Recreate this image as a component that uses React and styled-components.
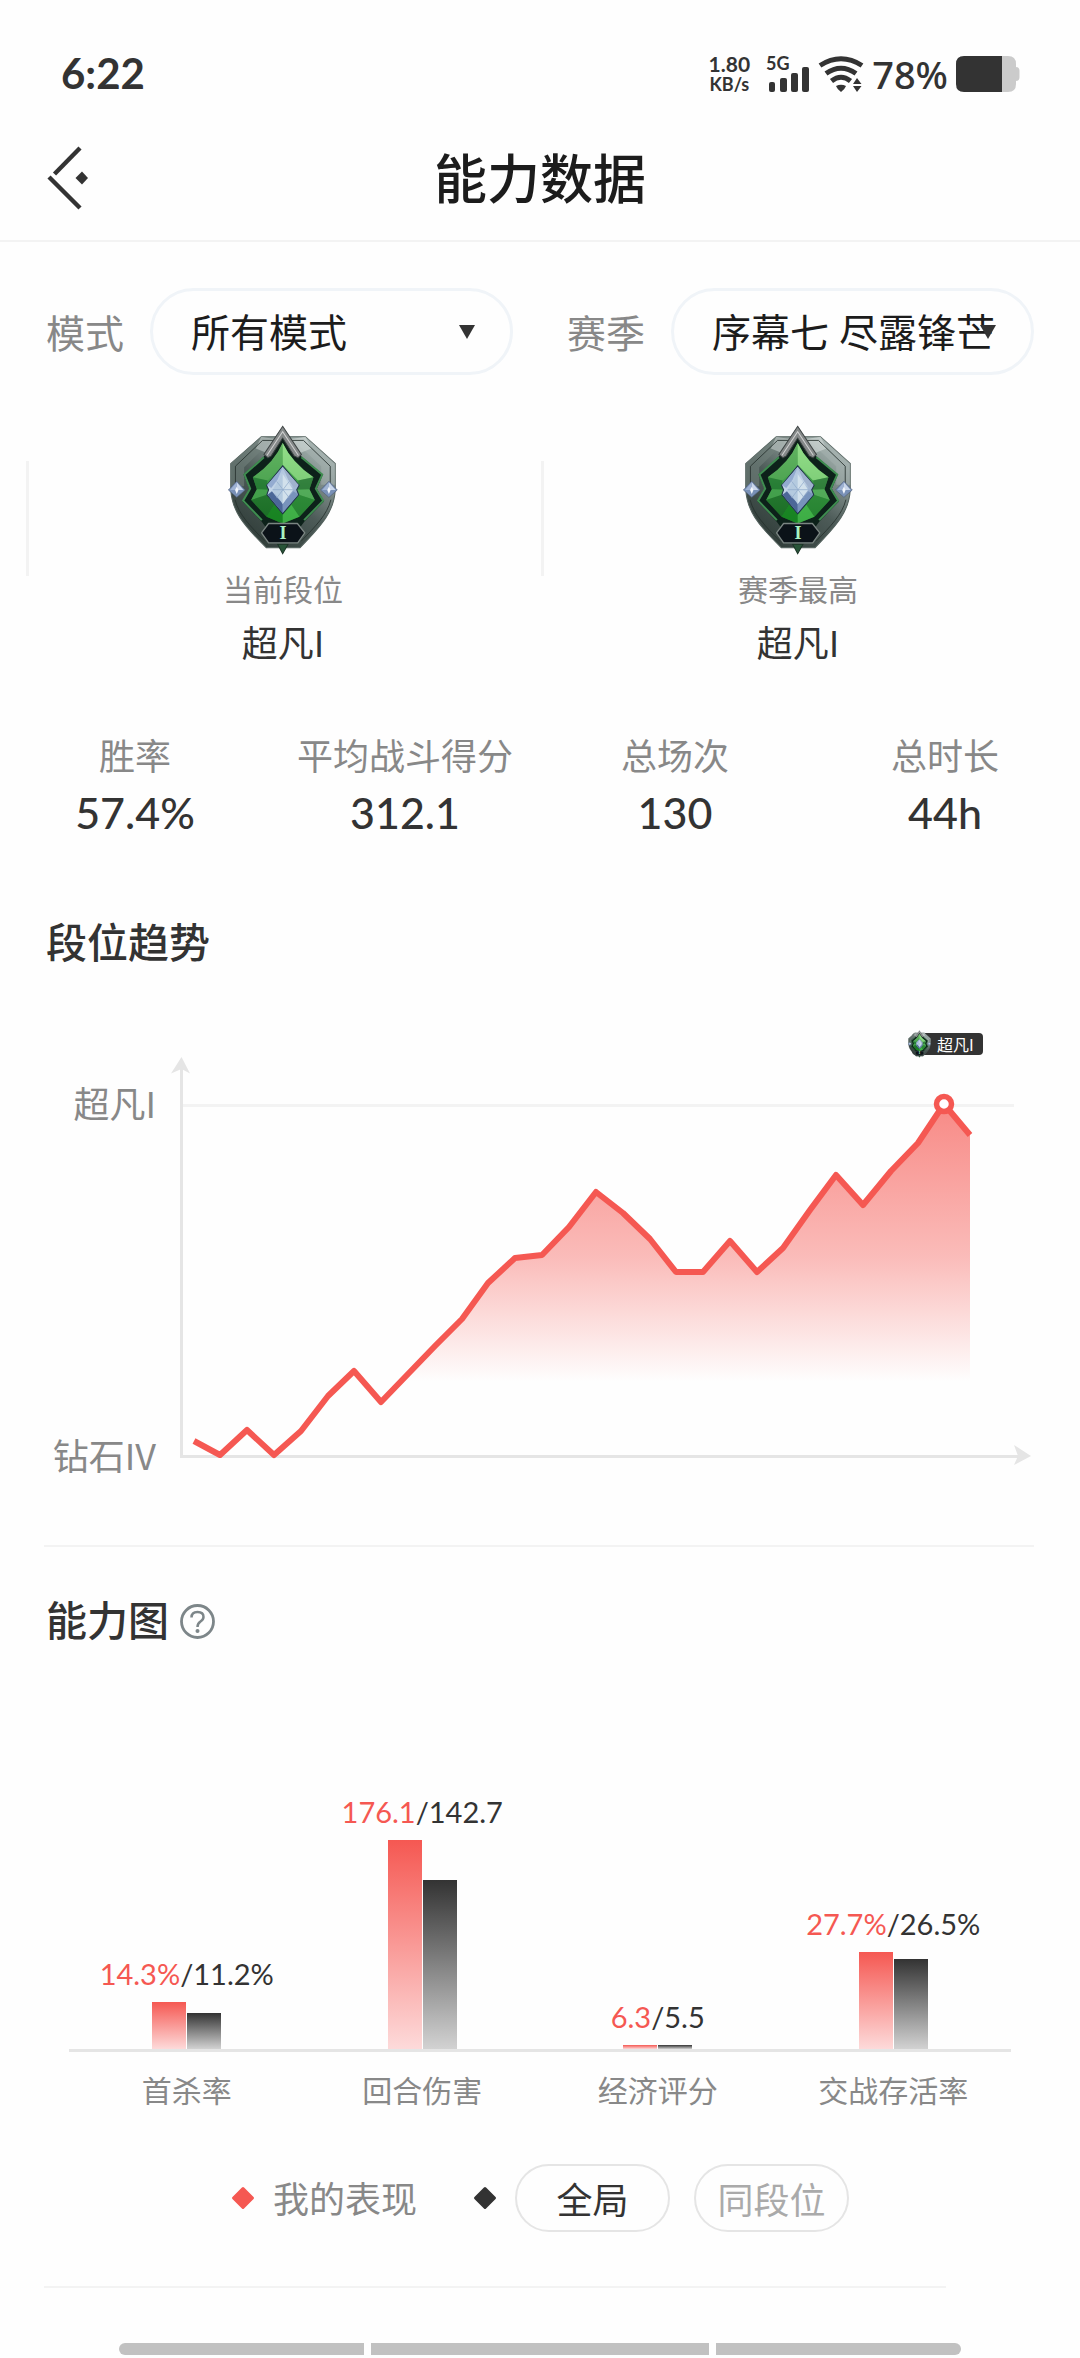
import React, { useState } from 'react';
import styled, { createGlobalStyle } from 'styled-components';

const RED = '#f55852';
const DARK = '#333333';
const GRAY = '#888888';
const AXIS = '#e5e5e5';
const LINE = '#f3f3f3';

const MODES = ['所有模式', '竞技模式', '普通模式'];
const SEASONS = ['序幕七 尽露锋芒', '序幕六'];

const RANKS = [
  { id: 'current', label: '当前段位', value: '超凡I' },
  { id: 'best', label: '赛季最高', value: '超凡I' },
];

const STATS = [
  { label: '胜率', value: '57.4%' },
  { label: '平均战斗得分', value: '312.1' },
  { label: '总场次', value: '130' },
  { label: '总时长', value: '44h' },
];

const TREND = [
  [194, 1441], [220, 1455], [247, 1430], [274, 1455], [301, 1431],
  [328, 1396], [354, 1371], [381, 1402], [408, 1374], [435, 1346],
  [462, 1319], [488, 1283], [515, 1258], [542, 1255], [569, 1227],
  [596, 1192], [623, 1213], [650, 1239], [676, 1272], [703, 1272],
  [730, 1241], [757, 1272], [783, 1248], [810, 1210], [836, 1175],
  [863, 1205], [891, 1171], [918, 1143], [944, 1104], [970, 1135],
];

const ABILITIES = [
  { label: '首杀率', mine: '14.3%', other: '11.2%', bars: [47, 36] },
  { label: '回合伤害', mine: '176.1', other: '142.7', bars: [209, 169] },
  { label: '经济评分', mine: '6.3', other: '5.5', bars: [4, 4] },
  { label: '交战存活率', mine: '27.7%', other: '26.5%', bars: [97, 90] },
];

export default function App() {
  const [scope, setScope] = useState('全局');

  return (
    <Page>
      <GlobalStyle />
      <StatusBar />
      <Header>
        <BackButton type='button' aria-label='返回'>
          <BackIcon />
        </BackButton>
        <h1>能力数据</h1>
      </Header>

      <Filters>
        <Filter id='mode' label='模式' options={MODES} />
        <Filter id='season' label='赛季' options={SEASONS} />
      </Filters>

      <RankRow>
        {RANKS.map((rank) => (
          <RankCell key={rank.id}>
            <RankDivider />
            <RankInfo>
              <Emblem id={rank.id} width='110' height='130' />
              <RankLabel>{rank.label}</RankLabel>
              <RankValue>{rank.value}</RankValue>
            </RankInfo>
          </RankCell>
        ))}
      </RankRow>

      <StatRow>
        {STATS.map((stat) => (
          <Stat key={stat.label}>
            <dt>{stat.label}</dt>
            <dd>{stat.value}</dd>
          </Stat>
        ))}
      </StatRow>

      <TrendTitle>段位趋势</TrendTitle>
      <TrendChart />
      <Divider />

      <AbilityHead>
        <SectionTitle>能力图</SectionTitle>
        <HelpButton type='button' aria-label='说明'>
          <HelpIcon />
        </HelpButton>
      </AbilityHead>
      <AbilityChart />

      <Legend>
        <Diamond color={RED} />
        <LegendText>我的表现</LegendText>
        <Diamond color={DARK} />
        <Scopes>
          {['全局', '同段位'].map((name) => (
            <ScopeButton
              key={name}
              type='button'
              $active={scope === name}
              aria-pressed={scope === name}
              onClick={() => setScope(name)}
            >
              {name}
            </ScopeButton>
          ))}
        </Scopes>
      </Legend>
      <ShortDivider />

      <NavBar>
        <NavPart $grow={245} />
        <NavPart $grow={338} />
        <NavPart $grow={245} />
      </NavBar>
    </Page>
  );
}

const StatusBar = () => (
  <StatusWrap>
    <Clock>6:22</Clock>
    <StatusRight>
      <NetSpeed>
        <span>1.80</span>
        <small>KB/s</small>
      </NetSpeed>
      <svg width='44' height='48' viewBox='0 -6 44 48' fill={DARK}>
        <SignalText x='0' y='14'>
          5G
        </SignalText>
        <rect x='3' y='26' width='6' height='10' rx='2' />
        <rect x='14' y='22' width='7' height='14' rx='2' />
        <rect x='25' y='17' width='7' height='19' rx='2' />
        <rect x='36' y='11' width='7' height='25' rx='2' />
      </svg>
      <svg width='46' height='36' viewBox='0 0 46 36' fill='none'>
        <g stroke={DARK} strokeWidth='5'>
          <path d='M2 9.500Q23 -4 44 9.500' />
          <path d='M8 17.500Q23 7 38 17.500' />
          <path d='M13.500 25Q23 17.500 32.500 25' />
        </g>
        <path d='M18 30Q23 27.500 28 30Q27 33 23 36Q19 33 18 30Z' fill={DARK} />
        <path d='M35 28L39 22L43.500 28ZM35 30H43.500L39 36Z' fill={DARK} />
      </svg>
      <Percent>78%</Percent>
      <svg width='64' height='36' viewBox='0 0 64 36'>
        <path
          d='M46 0H52Q60 0 60 8V11Q63.500 11 63.500 15V21Q63.500 25 60 25V28Q60 36 52 36H46Z'
          fill='#cbcbcb'
        />
        <path d='M8 0H46V36H8Q0 36 0 28V8Q0 0 8 0Z' fill={DARK} />
      </svg>
    </StatusRight>
  </StatusWrap>
);

const BackIcon = () => (
  <svg width='42' height='64' viewBox='0 0 42 64' fill='none'>
    <g stroke={DARK} strokeWidth='4.400'>
      <path d='M34 2L8.500 28' />
      <path d='M3 31L34 62' />
    </g>
    <path d='M36 25.500L42 32L36 38.500L29.500 32Z' fill={DARK} />
  </svg>
);

const HelpIcon = () => (
  <svg width='35' height='35' viewBox='0 0 35 35' fill='none' stroke='#7d8689'>
    <circle cx='17.500' cy='17.500' r='16' strokeWidth='2.800' />
    <path
      d='M11.500 13.500Q11.500 8 17.500 8Q23.500 8 23.500 13Q23.500 15.500 20.500 17.500Q17.500 19.500 17.500 23'
      strokeWidth='2.500'
    />
    <circle cx='17.500' cy='27' r='2' fill='#7d8689' stroke='none' />
  </svg>
);

const Diamond = ({ color }) => (
  <svg width='24' height='24' viewBox='0 0 24 24'>
    <path
      d='M12 2.500L21.500 12L12 21.500L2.500 12Z'
      fill={color}
      stroke={color}
      strokeWidth='3'
      strokeLinejoin='round'
    />
  </svg>
);

const Filter = ({ id, label, options }) => (
  <FilterGroup>
    <label htmlFor={id}>{label}</label>
    <SelectWrap>
      <Select id={id}>
        {options.map((option) => (
          <option key={option}>{option}</option>
        ))}
      </Select>
      <Arrow width='18' height='14' viewBox='0 0 18 14'>
        <path d='M1 0H17L9 14Z' fill={DARK} />
      </Arrow>
    </SelectWrap>
  </FilterGroup>
);

// rank emblem: steel shield, green gem, blue core and a number plate
const Emblem = ({ id, ...props }) => (
  <svg viewBox='88 42 326 388' {...props}>
    <defs>
      <linearGradient id={`${id}-steel`} x1='0' y1='1' x2='0.7' y2='0'>
        <stop offset='0' stopColor='#27332f' />
        <stop offset='0.55' stopColor='#4d5b58' />
        <stop offset='1' stopColor='#a6b4b1' />
      </linearGradient>
      <linearGradient id={`${id}-green`} x1='0' y1='0' x2='0' y2='1'>
        <stop offset='0' stopColor='#7fd17c' />
        <stop offset='0.5' stopColor='#3b9a44' />
        <stop offset='1' stopColor='#1c7c25' />
      </linearGradient>
      <linearGradient id={`${id}-core`} x1='0' y1='0' x2='0.3' y2='1'>
        <stop offset='0' stopColor='#a3b9d6' />
        <stop offset='0.5' stopColor='#c3d5e8' />
        <stop offset='1' stopColor='#5d7aa9' />
      </linearGradient>
    </defs>
    <path
      d='M95 157L186 77H318L407 157V235C404 297 372 336 302 408H201C128 336 99 297 95 235Z'
      fill={`url(#${id}-steel)`}
      stroke='#53615d'
      strokeWidth='3'
    />
    <path d='M186 77L222 84L135 168V225H95V157Z' fill='#71807c' opacity='0.6' />
    <path d='M318 77L283 88L365 165V220H407V157Z' fill='#a5b2af' opacity='0.5' />
    <path d='M186 77L170 112L205 126L226 84Z' fill='#c1cac8' opacity='0.6' />
    <path d='M318 77L336 112L300 126L276 84Z' fill='#d3dad8' opacity='0.6' />
    <path
      d='M109 215V165L190 88H312L392 165V215M108 265C119 310 155 345 197 389M394 265C383 310 347 345 305 389'
      fill='none'
      stroke='#26312e'
      strokeWidth='2.500'
    />
    <path
      d='M250 78L194 136L133 190L151 232L130 270L187 330L208 358H294L315 330L373 270L352 232L370 190L306 136Z'
      fill='#0d211a'
    />
    <path
      d='M194 138L136 190L153 232L132 268L188 326M306 138L368 190L349 232L371 268L314 326'
      fill='none'
      stroke='#3f8c50'
      strokeWidth='6'
    />
    <path
      d='M250 96Q225 155 161 198L173 234L156 266L202 316L250 336L300 316L346 266L330 234L342 198Q278 155 250 96Z'
      fill={`url(#${id}-green)`}
    />
    <path d='M250 96Q277 155 342 198L296 208L250 160Z' fill='#9be48f' opacity='0.7' />
    <path d='M250 96Q225 155 161 198L205 208L250 160Z' fill='#55a857' opacity='0.7' />
    <path d='M161 198L205 208L202 222L208 235L173 234Z' fill='#1d6c2d' opacity='0.6' />
    <path d='M342 198L296 208L299 222L292 235L330 234Z' fill='#2d7039' opacity='0.6' />
    <path d='M173 234L208 235L203 250L156 266Z' fill='#4aa653' opacity='0.7' />
    <path d='M330 234L292 235L298 250L346 266Z' fill='#67ba6c' opacity='0.6' />
    <path d='M156 266L203 250L225 280L202 316Z' fill='#165c22' opacity='0.5' />
    <path d='M346 266L298 250L276 280L300 316Z' fill='#2b8537' opacity='0.6' />
    <path d='M225 280L250 310V336L202 316Z' fill='#168420' opacity='0.8' />
    <path d='M276 280L250 310V336L300 316Z' fill='#4bc252' opacity='0.7' />
    <path
      d='M250 164L292 214L299 222L292 235L298 250L250 307L203 250L208 235L202 222L209 214Z'
      fill={`url(#${id}-core)`}
      stroke='#20314b'
      strokeWidth='3'
    />
    <path d='M250 167L235 205L216 230L203 221Z' fill='#93abd0' />
    <path d='M250 167L266 205L284 230L298 221Z' fill='#9fb2cd' />
    <path d='M205 250L218 240L232 258L250 275V304Z' fill='#4c6798' />
    <path d='M296 250L282 240L268 258L250 275V304Z' fill='#7893bc' />
    <path d='M250 188L281 235L250 278L220 235Z' fill='#b4cadf' />
    <path d='M250 188V278L281 235Z' fill='#d2e1ec' />
    <path d='M220 235H281M232 210L270 260M270 210L232 260' stroke='#8ba6c7' strokeWidth='2' />
    <path
      d='M250 46L306 130L296 140L284 134L250 81L216 134L206 140L194 130Z'
      fill='#858989'
      stroke='#3d4343'
      strokeWidth='3'
    />
    <path d='M203 133L250 62L297 133' fill='none' stroke='#d0d1d1' strokeWidth='3' />
    {[113, 388].map((x) => (
      <g key={x} transform={`translate(${x} 236)`}>
        <path d='M0 -26L25 0L0 22L-25 0Z' fill='#7991b7' stroke='#52627e' strokeWidth='2' />
        <path d='M0 -23L20 0H0Z' fill='#cad7ea' />
        <path d='M0 -23L-20 0H0Z' fill='#9fb3d3' />
        <path d='M0 -10L5 0L0 12L-5 0Z' fill='#f2f6fc' />
      </g>
    ))}
    <path d='M235 398L250 426L266 398Z' fill='#285438' stroke='#1b3426' strokeWidth='3' />
    <path
      d='M187 364L208 336H294L316 364L295 394H208Z'
      fill='#0b1218'
      stroke='#7b8582'
      strokeWidth='4'
      strokeLinejoin='round'
    />
    <PlateText x='251' y='383' textAnchor='middle'>
      I
    </PlateText>
  </svg>
);

const TrendChart = () => {
  const line = TREND.map((point) => point.join(' ')).join('L');
  return (
    <TrendSvg viewBox='0 1020 1080 460' role='img' aria-label='段位趋势'>
      <defs>
        <linearGradient
          id='trend-fill'
          gradientUnits='userSpaceOnUse'
          x1='0'
          y1='1104'
          x2='0'
          y2='1382'
        >
          <stop offset='0' stopColor={RED} stopOpacity='0.7' />
          <stop offset='0.55' stopColor={RED} stopOpacity='0.4' />
          <stop offset='1' stopColor={RED} stopOpacity='0' />
        </linearGradient>
      </defs>
      <AxisText x='156' y='1118' textAnchor='end'>
        超凡I
      </AxisText>
      <AxisText x='156' y='1470' textAnchor='end'>
        钻石IV
      </AxisText>
      <path d='M183 1105.500H1014' stroke={LINE} strokeWidth='3' />
      <path d='M181.500 1065V1456.500H1020' fill='none' stroke={AXIS} strokeWidth='3' />
      <path d='M181.500 1057L190 1073.500L181.500 1069L171 1073.500Z' fill={AXIS} />
      <path d='M1031 1456L1014 1445L1018 1456L1014 1465Z' fill={AXIS} />
      <path d={`M${line}V1456H194Z`} fill='url(#trend-fill)' />
      <path
        d={`M${line}`}
        fill='none'
        stroke={RED}
        strokeWidth='6'
        strokeLinejoin='round'
      />
      <circle cx='944' cy='1104' r='7.500' fill='#fff' stroke={RED} strokeWidth='5.500' />
      <rect x='912' y='1033' width='71' height='22' rx='4' fill={DARK} />
      <Emblem id='peak' x='908' y='1030' width='23' height='28' />
      <TipText x='937' y='1051'>
        超凡I
      </TipText>
    </TrendSvg>
  );
};

const AbilityChart = () => (
  <AbilityWrap>
    {ABILITIES.map((item) => (
      <Ability key={item.label}>
        <Plot>
          <Values>
            <em>{item.mine}</em>/{item.other}
          </Values>
          <Bars>
            <Bar $from={RED} $to='#fddada' style={{ height: item.bars[0] }} />
            <Bar $from={DARK} $to='#d2d2d2' style={{ height: item.bars[1] }} />
          </Bars>
        </Plot>
        <AbilityLabel>{item.label}</AbilityLabel>
      </Ability>
    ))}
  </AbilityWrap>
);

const GlobalStyle = createGlobalStyle`
  * {
    box-sizing: border-box;
  }

  body {
    margin: 0;
    background-color: #fefefe;
    font-family: Lato, 'Noto Sans CJK SC', sans-serif;
    color: ${DARK};
  }

  h1, h2, dl, dd {
    margin: 0;
  }

  button, select {
    font-family: inherit;
    cursor: pointer;
  }

  svg {
    display: block;
    flex-shrink: 0;
  }
`;

const Page = styled.main`
  display: flex;
  flex-direction: column;
  overflow: hidden;
`;

const StatusWrap = styled.div`
  height: 116px;
  padding: 32px 60px 0 61px;
  display: flex;
  align-items: center;
  justify-content: space-between;
`;

const Clock = styled.span`
  font-size: 42px;
  font-weight: 700;
  line-height: 48px;
  padding-bottom: 2px;
`;

const StatusRight = styled.div`
  display: flex;
  align-items: center;
  gap: 8px;
`;

const NetSpeed = styled.div`
  display: flex;
  flex-direction: column;
  align-items: center;
  margin-right: 8px;
  font-weight: 700;
  font-size: 21px;
  line-height: 20px;

  small {
    font-size: 18px;
    line-height: 20px;
  }
`;

const SignalText = styled.text`
  font-size: 18px;
  font-weight: 700;
`;

const Percent = styled.span`
  font-family: 'Noto Sans', sans-serif;
  font-size: 38px;
  font-weight: 500;
  line-height: 40px;
`;

const Header = styled.header`
  height: 126px;
  padding: 0 46px;
  border-bottom: 2px solid ${LINE};
  display: grid;
  grid-template-columns: 1fr auto 1fr;
  align-items: center;

  h1 {
    padding-top: 2px;
    font-size: 53px;
    font-weight: 500;
    line-height: 64px;
    color: #1c1c1c;
  }
`;

const BackButton = styled.button`
  justify-self: start;
  padding: 0;
  border: none;
  background: none;
`;

const Filters = styled.div`
  display: flex;
  gap: 54px;
  padding: 46px 46px 0;
`;

const FilterGroup = styled.div`
  flex: 1;
  min-width: 0;
  display: flex;
  align-items: center;
  gap: 26px;

  label {
    padding-bottom: 2px;
    font-size: 39px;
    color: ${GRAY};
    white-space: nowrap;
  }
`;

const SelectWrap = styled.div`
  position: relative;
  flex: 1;
  min-width: 0;
`;

const Select = styled.select`
  appearance: none;
  display: block;
  width: 100%;
  height: 87px;
  padding: 0 30px 0 38px;
  border: 3px solid #f0f4f8;
  border-radius: 44px;
  background: transparent;
  font-size: 39px;
  color: #1c1c1c;
`;

const Arrow = styled.svg`
  position: absolute;
  top: 37px;
  right: 37px;
  pointer-events: none;
`;

const RankRow = styled.div`
  display: flex;
  padding: 50px 24px 0 26px;
`;

const RankCell = styled.div`
  flex: 1;
  display: flex;
  align-items: flex-start;
`;

const RankDivider = styled.i`
  width: 3px;
  height: 115px;
  margin-top: 36px;
  background-color: ${LINE};
`;

const RankInfo = styled.div`
  flex: 1;
  display: flex;
  flex-direction: column;
  align-items: center;
  margin-right: 4px;
`;

const RankLabel = styled.span`
  margin-top: 14px;
  font-size: 30px;
  line-height: 40px;
  color: ${GRAY};
`;

const RankValue = styled.span`
  margin-top: 10px;
  font-family: 'Noto Sans CJK SC', sans-serif;
  font-size: 36px;
  line-height: 44px;
`;

const StatRow = styled.dl`
  display: flex;
  padding-top: 69px;
`;

const Stat = styled.div`
  flex: 1;
  display: flex;
  flex-direction: column;
  align-items: center;
  gap: 5px;

  dt {
    font-size: 36px;
    line-height: 48px;
    color: ${GRAY};
  }

  dd {
    font-size: 43px;
    font-weight: 500;
    line-height: 56px;
  }
`;

const SectionTitle = styled.h2`
  font-size: 41px;
  font-weight: 500;
  line-height: 56px;
`;

const TrendTitle = styled(SectionTitle)`
  padding: 74px 46px 0;
`;

const TrendSvg = styled.svg`
  width: 100%;
  margin-top: 49px;
`;

const AxisText = styled.text`
  font-family: 'Noto Sans CJK SC', sans-serif;
  font-size: 36px;
  fill: ${GRAY};
`;

const TipText = styled.text`
  font-family: 'Noto Sans CJK SC', sans-serif;
  font-size: 16px;
  fill: #ffffff;
`;

const PlateText = styled.text`
  font-family: 'Liberation Serif', serif;
  font-size: 54px;
  font-weight: 700;
  fill: #a9f3c4;
`;

const Divider = styled.hr`
  height: 2px;
  margin: 65px 46px 0 44px;
  border: none;
  background-color: ${LINE};
`;

const ShortDivider = styled(Divider)`
  margin: 54px 134px 0 44px;
`;

const AbilityHead = styled.div`
  display: flex;
  align-items: center;
  gap: 11px;
  padding: 46px 46px 0;
`;

const HelpButton = styled.button`
  padding: 0;
  border: none;
  background: none;
`;

const AbilityWrap = styled.div`
  display: flex;
  margin: 0 69px;
`;

const Ability = styled.div`
  flex: 1;
`;

const Plot = styled.div`
  height: 403px;
  border-bottom: 3px solid ${AXIS};
  display: flex;
  flex-direction: column;
  align-items: center;
  justify-content: flex-end;
  gap: 13px;
`;

const Values = styled.span`
  font-size: 29px;
  line-height: 30px;
  white-space: nowrap;

  em {
    font-style: normal;
    color: ${RED};
  }
`;

const Bars = styled.div`
  display: flex;
  align-items: flex-end;
  gap: 1px;
`;

const Bar = styled.div`
  width: 34px;
  background-image: linear-gradient(${(props) => props.$from}, ${(props) => props.$to});
`;

const AbilityLabel = styled.div`
  margin-top: 18px;
  font-size: 30px;
  line-height: 40px;
  text-align: center;
  color: ${GRAY};
`;

const Legend = styled.div`
  display: flex;
  align-items: center;
  justify-content: center;
  gap: 18px;
  margin-top: 54px;
`;

const LegendText = styled.span`
  margin-right: 38px;
  padding-top: 2px;
  font-size: 36px;
  line-height: 48px;
  color: ${GRAY};
`;

const Scopes = styled.div`
  display: flex;
  gap: 24px;
`;

const ScopeButton = styled.button`
  width: 155px;
  height: 68px;
  padding: 0;
  border: 2px solid ${AXIS};
  border-radius: 34px;
  background: none;
  font-size: 36px;
  color: ${(props) => (props.$active ? DARK : '#aaaaaa')};
`;

const NavBar = styled.div`
  display: flex;
  gap: 7px;
  padding: 55px 119px 3px;
`;

const NavPart = styled.div`
  flex: ${(props) => props.$grow};
  height: 12px;
  background-color: #c1c1c1;

  &:first-child {
    border-radius: 6px 0 0 6px;
  }

  &:last-child {
    border-radius: 0 6px 6px 0;
  }
`;
